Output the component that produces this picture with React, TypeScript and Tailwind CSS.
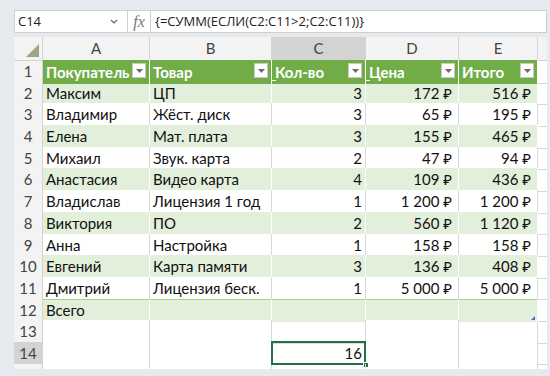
import React from 'react';

type Row = [string, string, number, string, string];

const rows: Row[] = [
  ['Максим', 'ЦП', 3, '172 ₽', '516 ₽'],
  ['Владимир', 'Жёст. диск', 3, '65 ₽', '195 ₽'],
  ['Елена', 'Мат. плата', 3, '155 ₽', '465 ₽'],
  ['Михаил', 'Звук. карта', 2, '47 ₽', '94 ₽'],
  ['Анастасия', 'Видео карта', 4, '109 ₽', '436 ₽'],
  ['Владислав', 'Лицензия 1 год', 1, '1 200 ₽', '1 200 ₽'],
  ['Виктория', 'ПО', 2, '560 ₽', '1 120 ₽'],
  ['Анна', 'Настройка', 1, '158 ₽', '158 ₽'],
  ['Евгений', 'Карта памяти', 3, '136 ₽', '408 ₽'],
  ['Дмитрий', 'Лицензия беск.', 1, '5 000 ₽', '5 000 ₽'],
];

const cols = ['A', 'B', 'C', 'D', 'E'];
const gridCols = 'grid grid-cols-[29px_107px_122px_94px_93px_79px_9px]';

const FilterButton = () => (
  <span className="absolute right-[3px] top-[3px] w-[14px] h-[15px] bg-white border border-[#c9c9c9] flex items-center justify-center">
    <svg width="7" height="4" viewBox="0 0 7 4">
      <path d="M0 0h7L3.5 4z" fill="#6b6b6b" />
    </svg>
  </span>
);

const RowNum: React.FC<{ n: number; selected?: boolean }> = ({ n, selected }) => (
  <div
    className={`flex items-center justify-center border-r border-b border-[#d4d4d4] text-[#444] text-[15px] ${
      selected ? 'bg-[#d3d3d3]' : 'bg-[#f3f3f3]'
    }`}
  >
    {n}
  </div>
);

const Cell: React.FC<{ green?: boolean; right?: boolean; pr?: string; children?: React.ReactNode; top?: boolean }> = ({
  green,
  right,
  pr,
  children,
  top,
}) => (
  <div
    className={`flex items-center overflow-hidden whitespace-nowrap border-b text-[15px] text-[#111] ${
      green ? 'bg-[#e2efda] border-r border-r-white border-b-[#e2efda]' : 'bg-white border-r border-[#dadada]'
    } ${right ? 'justify-end' : 'justify-start pl-[3px]'} ${pr ?? ''} ${top ? 'border-t border-t-[#a9d08e]' : ''}`}
  >
    {children}
  </div>
);

export default function App() {
  return (
    <div className="w-[550px] h-[376px] overflow-hidden bg-[#e6e9ed] pt-[10px] pl-[14px] pr-[3px] font-['Lato','Noto_Sans',sans-serif]">
      {/* formula bar */}
      <div className="h-[23px] flex bg-white border border-[#d0d0d0] font-['Open_Sans','Noto_Sans',sans-serif] text-[13px] text-[#222]">
        <div className="w-[113px] flex items-center justify-between pl-[3px] pr-[9px] border-r border-[#d0d0d0]">
          <span>C14</span>
          <svg width="8" height="5" viewBox="0 0 8 5">
            <path d="M1 1l3 3 3-3" stroke="#666" strokeWidth="1.2" fill="none" />
          </svg>
        </div>
        <div className="w-[23px] flex items-center justify-center border-r border-[#d0d0d0] font-['Liberation_Serif',serif] italic text-[16px] text-[#777]">
          fx
        </div>
        <div className="flex-1 flex items-center pl-[4px]">{'{=СУММ(ЕСЛИ(C2:C11>2;C2:C11))}'}</div>
      </div>

      {/* sheet */}
      <div className="mt-[4px] h-[332px] overflow-hidden bg-white">
        {/* column headers */}
        <div className={`${gridCols} h-[23px]`}>
          <div className="relative bg-[#f3f3f3] border-r border-b border-[#d4d4d4]">
            <svg className="absolute right-[3px] bottom-[3px]" width="13" height="13" viewBox="0 0 13 13">
              <path d="M13 0V13H0z" fill="#9aa784" />
            </svg>
          </div>
          {cols.map((c) => (
            <div
              key={c}
              className={`flex items-center justify-center border-r border-b border-[#d4d4d4] text-[15px] text-[#444] ${
                c === 'C' ? 'bg-[#d3d3d3]' : 'bg-[#f3f3f3]'
              }`}
            >
              {c}
            </div>
          ))}
          <div className="bg-[#f3f3f3] border-b border-[#d4d4d4]" />
        </div>

        {/* table header row */}
        <div className={`${gridCols} h-[21.7px]`}>
          <RowNum n={1} />
          {['Покупатель', 'Товар', 'Кол-во', 'Цена', 'Итого'].map((h, i) => (
            <div
              key={h}
              className="relative flex items-center overflow-hidden whitespace-nowrap bg-[#70ad47] border-r border-r-white text-white font-bold text-[15px] pl-[3px]"
            >
              {(i === 2 || i === 3) && <span className="absolute left-0 bottom-[3px] w-[4px] h-px bg-white" />}
              {h}
              <FilterButton />
            </div>
          ))}
          <div className="border-b border-[#dadada]" />
        </div>

        {rows.map((r, i) => {
          const green = i % 2 === 0;
          return (
            <div key={i} className={`${gridCols} h-[21.7px]`}>
              <RowNum n={i + 2} />
              <Cell green={green}>{r[0]}</Cell>
              <Cell green={green}>{r[1]}</Cell>
              <Cell green={green} right pr="pr-[3px]">
                {r[2]}
              </Cell>
              <Cell green={green} right pr="pr-[6px]">
                {r[3]}
              </Cell>
              <Cell green={green} right pr="pr-[6px]">
                {r[4]}
              </Cell>
              <div className="border-b border-[#dadada]" />
            </div>
          );
        })}

        {/* total row */}
        <div className={`${gridCols} h-[21.7px]`}>
          <RowNum n={12} />
          <Cell green top>
            Всего
          </Cell>
          <Cell green top />
          <Cell green top />
          <Cell green top />
          <div className="relative bg-[#e2efda] border-t border-t-[#a9d08e] border-r border-r-white">
            <svg className="absolute right-[2px] bottom-[2px]" width="4" height="4" viewBox="0 0 4 4">
              <path d="M4 0V4H0z" fill="#4472c4" />
            </svg>
          </div>
          <div className="border-b border-[#dadada]" />
        </div>

        {[13, 14, 15].map((n) => (
          <div key={n} className={`${gridCols} h-[21.7px]`}>
            <RowNum n={n} selected={n === 14} />
            <Cell />
            <Cell />
            <div className="relative flex items-center justify-end pr-[3px] text-[15px] text-[#111] border-r border-b border-[#dadada]">
              {n === 14 && (
                <>
                  <span className="absolute -left-px -top-px right-[-1px] bottom-[-1px] border-2 border-[#217346]" />
                  <span className="absolute right-[-4px] bottom-[-4px] w-[6px] h-[6px] bg-[#217346] border border-white" />
                  16
                </>
              )}
            </div>
            <Cell />
            <Cell />
            <div className="border-b border-[#dadada]" />
          </div>
        ))}
      </div>
    </div>
  );
}
